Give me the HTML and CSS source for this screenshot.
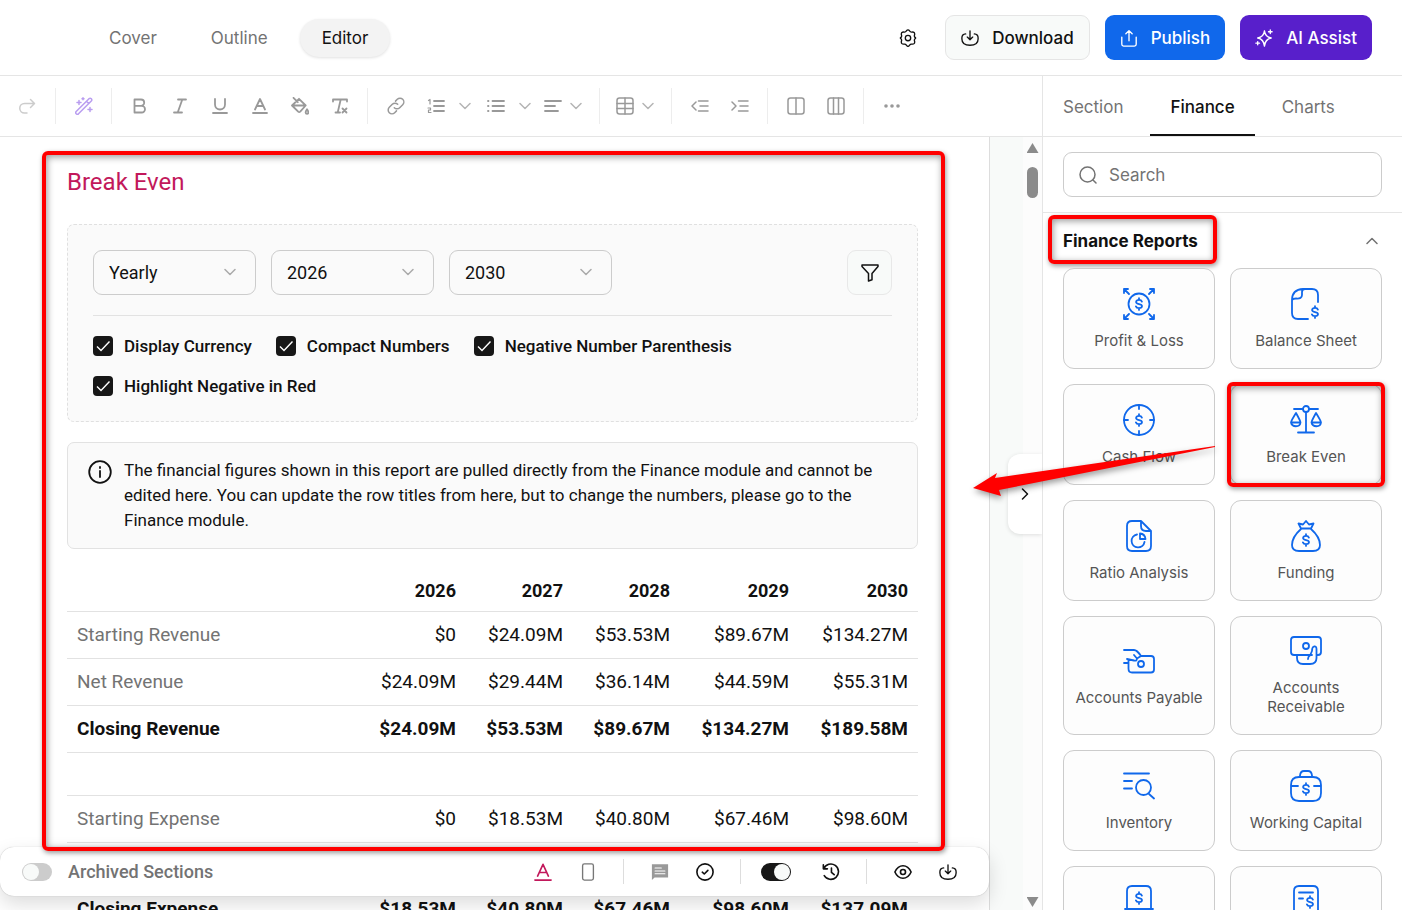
FILE: index.html
```
<!DOCTYPE html>
<html lang="en">
<head>
  <meta charset="utf-8">
  <title>Plan Editor - Break Even</title>
  <meta name="viewport" content="width=device-width, initial-scale=1.0">
  <link rel="stylesheet" href="styles.css">
</head>
<body>
  <!-- shared icons -->
  <svg class="sprite" aria-hidden="true">
    <symbol id="chevron" viewBox="0 0 12 12"><path d="M1 3.500l5 5 5-5"/></symbol>
    <symbol id="dollar" viewBox="0 0 32 32"><path d="M18.900 13.600c-.4-1.100-1.500-1.700-2.900-1.700-1.700 0-2.900.8-2.900 2.100 0 2.900 5.900 1.200 5.900 4.100 0 1.300-1.300 2.100-3 2.100-1.500 0-2.700-.6-3.100-1.800M16 10.200v1.700M16 20.200v1.700"/></symbol>
    <symbol id="download" viewBox="0 0 20 20"><path d="M10 2v10M7 9l3 3 3-3M5.200 5.500C2.300 5.800 1 7.300 1 9.800v1.200c0 4.700 2.800 7 9 7s9-2.300 9-7V9.800c0-2.500-1.300-4-4.200-4.300"/></symbol>
  </svg>

  <header class="topbar">
    <nav class="nav">
      <a href="#" class="nav-link">Cover</a>
      <a href="#" class="nav-link">Outline</a>
      <a href="#" class="nav-link active">Editor</a>
    </nav>
    <div class="actions">
      <button class="icon-btn" aria-label="Settings">
        <svg class="icon" viewBox="0 0 20 20"><path d="M8.200 2.200Q10-.4 11.800 2.200q.9 1.500 2.600 1.200 3.300-.3 3 2.800-.8 1.900.4 3.200 1.400.6 0 1.400-1.200 1.300-.4 3.200.3 3.100-3 2.800-1.700-.3-2.600 1.200-1.800 2.600-3.600 0-.9-1.500-2.600-1.200-3.300.3-3-2.800.8-1.900-.4-3.200-1.400-.8 0-1.400 1.200-1.300.4-3.200-.3-3.100 3-2.800 1.700.3 2.600-1.200z"/><circle cx="10" cy="10" r="3"/></svg>
      </button>
      <button class="btn btn-light"><svg class="icon"><use href="#download"/></svg>Download</button>
      <button class="btn btn-blue"><svg class="icon" viewBox="0 0 20 20"><path d="M10 13V2M6.500 5.300L10 1.800l3.500 3.500M2 9v8q0 2 2 2h12q2 0 2-2V9"/></svg>Publish</button>
      <button class="btn btn-purple"><svg class="icon" viewBox="0 0 20 20"><path d="M10.500 2q.8 6.700 7.500 8-6.700 1.300-7.500 9-.8-7.700-7.500-9 6.700-1.300 7.500-8zM17 1v4M15 3h4M3 14v3.500M1 15.700h4"/></svg>AI Assist</button>
    </div>
  </header>

  <div class="workspace">
    <main class="main">
      <div class="toolbar">
        <div class="tool-group">
          <button class="tool faded" aria-label="Redo"><svg class="icon" viewBox="0 0 18 18"><path d="M12.500 2.500L16.500 6.500l-4 4M16 6.500H6.500a4.700 4.700 0 0 0 0 9.500H9"/></svg></button>
        </div>
        <div class="tool-group">
          <button class="tool magic" aria-label="AI tools"><svg class="icon" viewBox="0 0 18 18"><path d="M1.200 14.500L14 1.700q1.200-1 2.300 0 1 1.200 0 2.300L3.500 16.800q-1.200 1-2.300 0-1-1.200 0-2.300zM11.500 4.300l2.200 2.200M4 3.500v4M2 5.500h4M15 10.500v4M13 12.500h4M8 .8v2M7 1.800h2"/></svg></button>
        </div>
        <div class="tool-group">
          <button class="tool" aria-label="Bold"><svg class="icon bold" viewBox="0 0 18 18"><path d="M3.500 2.500h6.500a3.200 3.200 0 0 1 0 6.400H3.500zM3.500 8.900h7.200a3.300 3.300 0 0 1 0 6.600H3.500z"/></svg></button>
          <button class="tool" aria-label="Italic"><svg class="icon bold" viewBox="0 0 18 18"><path d="M7 2.500h8M3 15.500h8M11.300 2.500l-4.600 13"/></svg></button>
          <button class="tool" aria-label="Underline"><svg class="icon bold" viewBox="0 0 18 18"><path d="M4 2v5.500a5 5 0 0 0 10 0V2M2 16h14"/></svg></button>
          <button class="tool" aria-label="Text color"><svg class="icon bold" viewBox="0 0 18 18"><path d="M4 12.500L9 2l5 10.500M5.700 9h6.600M2 16h14"/></svg></button>
          <button class="tool" aria-label="Fill color"><svg class="icon bold" viewBox="0 0 18 18"><path d="M2.500.8l4.300 4.400M8 1.800l6.700 6.700-5.500 6.200q-1 .9-2 0L1 8.500zM1.500 8.500h13M16 12.200c2 3 1.600 4.600 0 4.600s-2-1.600 0-4.600z"/></svg></button>
          <button class="tool" aria-label="Clear formatting"><svg class="icon bold" viewBox="0 0 18 18"><path d="M2 4.500v-2h14v2M9.700 2.500l-3 13M4.500 15.500H9M11.500 11.500l4 4M15.500 11.500l-4 4"/></svg></button>
        </div>
        <div class="tool-group">
          <button class="tool" aria-label="Link"><svg class="icon" viewBox="0 0 18 18"><path d="M7.300 10.700a3.800 3.800 0 0 0 5.400 0l3-3a3.800 3.800 0 0 0-5.400-5.400L8.500 4.100M10.700 7.300a3.800 3.800 0 0 0-5.400 0l-3 3a3.800 3.800 0 0 0 5.400 5.400l1.800-1.800"/></svg></button>
          <button class="split wide" aria-label="Numbered list"><svg class="icon bold" viewBox="0 0 18 18"><path d="M7 4h10M7 9h10M7 14h10"/><path class="thin" d="M1.500 3.500L3 2.500v4.500M1 11h2.500v2H1.500v2.500h2.500"/></svg><svg class="chev"><use href="#chevron"/></svg></button>
          <button class="split wide" aria-label="Bulleted list"><svg class="icon bold" viewBox="0 0 18 18"><path d="M5.500 4h11.500M5.500 9h11.500M5.500 14h11.500M1 4h.5M1 9h.5M1 14h.5"/></svg><svg class="chev"><use href="#chevron"/></svg></button>
          <button class="split" aria-label="Align"><svg class="icon bold" viewBox="0 0 18 18"><path d="M1 4h16M1 9h10M1 14h13"/></svg><svg class="chev"><use href="#chevron"/></svg></button>
        </div>
        <div class="tool-group">
          <button class="split" aria-label="Table"><svg class="icon" viewBox="0 0 18 18"><rect x="1" y="1" width="16" height="16" rx="2.500"/><path d="M1 6.500h16M1 11.500h16M9 1v16"/></svg><svg class="chev"><use href="#chevron"/></svg></button>
        </div>
        <div class="tool-group">
          <button class="tool" aria-label="Outdent"><svg class="icon" viewBox="0 0 18 18"><path d="M5 5L1 9l4 4M7.500 4H17M9 9h8M7.500 14H17"/></svg></button>
          <button class="tool" aria-label="Indent"><svg class="icon" viewBox="0 0 18 18"><path d="M1 5l4 4-4 4M7.500 4H17M9 9h8M7.500 14H17"/></svg></button>
        </div>
        <div class="tool-group">
          <button class="tool" aria-label="Two columns"><svg class="icon" viewBox="0 0 18 18"><rect x="1" y="1" width="16" height="16" rx="2.500"/><path d="M9 1v16"/></svg></button>
          <button class="tool" aria-label="Three columns"><svg class="icon" viewBox="0 0 18 18"><rect x="1" y="1" width="16" height="16" rx="2.500"/><path d="M6.500 1v16M11.500 1v16"/></svg></button>
        </div>
        <div class="tool-group">
          <button class="tool" aria-label="More"><svg class="icon dots" viewBox="0 0 18 18"><circle cx="3" cy="9" r="1.800"/><circle cx="9" cy="9" r="1.800"/><circle cx="15" cy="9" r="1.800"/></svg></button>
        </div>
      </div>

      <div class="canvas">
        <article class="page">
          <h1 class="title">Break Even</h1>

          <section class="filters">
            <div class="filter-row">
              <div class="select"><select aria-label="Period"><option>Yearly</option></select><svg class="chev"><use href="#chevron"/></svg></div>
              <div class="select"><select aria-label="From year"><option>2026</option></select><svg class="chev"><use href="#chevron"/></svg></div>
              <div class="select"><select aria-label="To year"><option>2030</option></select><svg class="chev"><use href="#chevron"/></svg></div>
              <button class="filter-btn" aria-label="Filter"><svg class="icon" viewBox="0 0 18 18"><path d="M1 1h16v1.500L11 9.500v6.200l-3.500 1.300V9.500L1 2.500z"/></svg></button>
            </div>
            <div class="checks">
              <label class="check"><input type="checkbox" checked>Display Currency</label>
              <label class="check"><input type="checkbox" checked>Compact Numbers</label>
              <label class="check"><input type="checkbox" checked>Negative Number Parenthesis</label>
              <label class="check"><input type="checkbox" checked>Highlight Negative in Red</label>
            </div>
          </section>

          <div class="notice">
            <svg class="notice-icon" viewBox="0 0 24 24"><circle cx="12" cy="12" r="10.800"/><path d="M12 11v6M12 7v1"/></svg>
            <p>The financial figures shown in this report are pulled directly from the Finance module and cannot be edited here. You can update the row titles from here, but to change the numbers, please go to the Finance module.</p>
          </div>

          <table class="report">
            <colgroup>
              <col>
              <col class="col-sm" span="3">
              <col class="col-lg" span="2">
            </colgroup>
            <thead>
              <tr><td></td><th>2026</th><th>2027</th><th>2028</th><th>2029</th><th>2030</th></tr>
            </thead>
            <tbody>
              <tr><th>Starting Revenue</th><td>$0</td><td>$24.09M</td><td>$53.53M</td><td>$89.67M</td><td>$134.27M</td></tr>
              <tr><th>Net Revenue</th><td>$24.09M</td><td>$29.44M</td><td>$36.14M</td><td>$44.59M</td><td>$55.31M</td></tr>
              <tr class="total"><th>Closing Revenue</th><td>$24.09M</td><td>$53.53M</td><td>$89.67M</td><td>$134.27M</td><td>$189.58M</td></tr>
              <tr class="spacer"><td colspan="6"></td></tr>
              <tr><th>Starting Expense</th><td>$0</td><td>$18.53M</td><td>$40.80M</td><td>$67.46M</td><td>$98.60M</td></tr>
              <tr class="spacer"><td colspan="6"></td></tr>
              <tr class="total"><th>Closing Expense</th><td>$18.53M</td><td>$40.80M</td><td>$67.46M</td><td>$98.60M</td><td>$137.09M</td></tr>
            </tbody>
          </table>
        </article>
        <div class="scrollbar">
          <span class="arrow-up"></span>
          <span class="thumb"></span>
          <span class="arrow-down"></span>
        </div>

        <button class="collapse" aria-label="Collapse panel"><svg class="chev" viewBox="0 0 12 12"><path d="M3.500 1l5 5-5 5"/></svg></button>

        <div class="bottom-bar">
          <label class="archived"><input type="checkbox" class="switch">Archived Sections</label>
          <div class="bar-tools">
            <button class="bar-btn pink" aria-label="Font color"><svg class="icon bold" viewBox="0 0 20 20"><path d="M4 14.500L10 1.500l6 13M6 10.500h8M1 19h18"/></svg></button>
            <button class="bar-btn gray" aria-label="Mobile view"><svg class="icon" viewBox="0 0 20 20"><rect x="4" y="1" width="12" height="18" rx="2"/></svg></button>
            <span class="divider"></span>
            <button class="bar-btn" aria-label="Comments"><svg class="icon comment" viewBox="0 0 20 20"><path d="M1 1.500h18v14.500h-15l-3 3z"/><path class="lines" d="M4.500 5.500h7M4.500 8.800h11M4.500 12h11"/></svg></button>
            <button class="bar-btn" aria-label="Approve"><svg class="icon bold" viewBox="0 0 20 20"><circle cx="10" cy="10" r="9"/><path d="M7 10.200l2.200 2 4-4"/></svg></button>
            <span class="divider"></span>
            <input type="checkbox" class="switch" checked aria-label="Track changes">
            <button class="bar-btn" aria-label="History"><svg class="icon bold" viewBox="0 0 20 20"><path d="M1.500 2v4.500H6M2 6.300A8.500 8.500 0 1 1 2.500 14M10.500 5.500V10.500l3 2.500"/></svg></button>
            <span class="divider"></span>
            <button class="bar-btn" aria-label="Preview"><svg class="icon bold" viewBox="0 0 20 20"><path d="M1 10c2-4.500 5-7 9-7s7 2.500 9 7c-2 4.500-5 7-9 7s-7-2.500-9-7z"/><circle cx="10" cy="10" r="2.800"/></svg></button>
            <button class="bar-btn" aria-label="Download"><svg class="icon"><use href="#download"/></svg></button>
          </div>
        </div>

        <div class="mark mark-report"></div>
      </div>
    </main>

    <aside class="sidebar">
      <nav class="tabs">
        <a href="#" class="tab">Section</a>
        <a href="#" class="tab active">Finance</a>
        <a href="#" class="tab">Charts</a>
      </nav>
      <div class="search-wrap">
        <div class="search">
          <svg class="icon" viewBox="0 0 18 18"><circle cx="8.500" cy="8.500" r="7.500"/><path d="M14 14l3 3"/></svg>
          <input type="text" placeholder="Search" aria-label="Search">
        </div>
      </div>
      <div class="panel">
        <div class="panel-head">
          <h2>Finance Reports<span class="mark mark-heading"></span></h2>
          <button class="fold" aria-label="Collapse section"><svg class="chev" viewBox="0 0 12 12"><path d="M1 8.500l5-5 5 5"/></svg></button>
        </div>
        <div class="tiles">
          <button class="tile"><svg viewBox="0 0 32 32"><circle cx="16" cy="16" r="10.500"/><use href="#dollar"/><path d="M6 6L1 1M1 5V1h4M26 6l5-5M27 1h4v4M6 26l-5 5M1 27v4h4M26 26l5 5M31 27v4h-4"/></svg>Profit &amp; Loss</button>
          <button class="tile"><svg viewBox="0 0 32 32"><path d="M28 14V7q0-6-6-6H13Q2 1.500 2 12v13q0 6 6 6h10M2 12q1-1.500 4-1.500 6 .5 6-3.500V4q0-3 3-3"/><use href="#dollar" x="9" y="8"/></svg>Balance Sheet</button>
          <button class="tile"><svg viewBox="0 0 32 32"><circle cx="16" cy="16" r="15"/><use href="#dollar"/><path d="M16 1v4M16 27v4M1 16h4M27 16h4"/></svg>Cash Flow</button>
          <button class="tile"><svg viewBox="0 0 32 32"><circle cx="16" cy="5" r="3"/><path d="M13 5H4M19 5h9M16 8V28.500M8 28.500h16M6 9q-5 8-5 9.500c1 5 9 5 9.500 0Q10.500 17 6 9zM1 18.500h9.500M26 9q-4.500 8-4.500 9.500c1 5 9 5 9.500 0Q31 17 26 9zM21.500 18.500H31"/></svg>Break Even<span class="mark mark-tile"></span></button>
          <button class="tile"><svg viewBox="0 0 32 32"><path d="M18 1H9Q4 1 4 6v20q0 5 5 5h14q5 0 5-5V11zM18 1v5q0 5 5 5h5M14 14.500a6.500 6.500 0 1 0 7.500 7.500M17 13.500V19h5.500q-.5-5-5.500-5.500z"/></svg>Ratio Analysis</button>
          <button class="tile"><svg viewBox="0 0 32 32"><path d="M11 8.500L8.500 3.500l4.500 1L16 1l3 3.500 4.500-1L21 8.500zM11 9Q2 17 2 25q0 6 7 6h14q7 0 7-6 0-8-9-16"/><use href="#dollar" y="4"/></svg>Funding</button>
          <button class="tile"><svg viewBox="0 0 32 32"><path d="M1 5h10q3 0 7 6M1 18h4.500M4 14l7 1.500q3 .8 3-2l-3-3.500M18 11h10q3 0 3 3v10.500q0 3-3 3H9q-3.500 0-3.500-4V15M14 13.500l4-2.500"/><circle cx="18" cy="19" r="3"/></svg>Accounts Payable</button>
          <button class="tile"><svg viewBox="0 0 32 32"><path d="M22 20H4q-3 0-3-3V5q0-3 3-3h24q3 0 3 3v12q0 3-3 3h-1.500M7 20v3q0 6 6 6h7q6.500 0 6.500-6V14q0-3-2.500-2.500-2 .5-2 4.500l-2 4.500q-2 1-2 3.500"/><circle cx="16" cy="11" r="3"/></svg>Accounts Receivable</button>
          <button class="tile"><svg viewBox="0 0 32 32"><path d="M1 3.500h25M1 11h8M1 18.500h8M26 24l5 4.500"/><circle cx="20.500" cy="17.500" r="7.500"/></svg>Inventory</button>
          <button class="tile"><svg viewBox="0 0 32 32"><path d="M10 7V5.500Q10.500 1 14 1h4q3.500 0 4 4.500V7M9 7h14q8 0 8 8v8q0 8-8 8H9q-8 0-8-8v-8q0-8 8-8zM1 16h7M24 16h7"/><use href="#dollar" y="3"/></svg>Working Capital</button>
          <button class="tile" aria-label="Loans"><svg viewBox="0 0 32 32"><path d="M4 23V6q0-5 5-5h14q5 0 5 5v17M2 24h28M5 24v3q0 4 4 4h14q4 0 4-4v-3"/><use href="#dollar" y="-3"/></svg></button>
          <button class="tile" aria-label="Taxes"><svg viewBox="0 0 32 32"><path d="M4 31V6q0-5 5-5h14q5 0 5 5v25M9 7.500h14M9 13.500h4"/><use href="#dollar" x="4" y="1"/></svg></button>
        </div>
      </div>
      <svg class="pointer" viewBox="0 0 252 70"><path d="M5 48l24-15-2 5L247 6v1L31 50l2 6z"/></svg>
    </aside>
  </div>
</body>
</html>
```
FILE: styles.css
```
* {
  margin: 0;
  padding: 0;
  box-sizing: border-box;
}

body {
  height: 100vh;
  display: flex;
  flex-direction: column;
  overflow: hidden;
  font-family: Inter, "Liberation Sans", sans-serif;
  font-size: 17px;
  color: #111;
  background: #fff;
}

button {
  font: inherit;
  color: inherit;
  background: none;
  border: none;
  cursor: pointer;
}

a {
  color: inherit;
  text-decoration: none;
}

svg {
  fill: none;
  stroke: currentColor;
  stroke-width: 1.5;
  stroke-linecap: round;
  stroke-linejoin: round;
  flex: none;
}

.sprite {
  position: absolute;
  width: 0;
  height: 0;
}

.icon {
  width: 18px;
  height: 18px;
}

.icon.bold {
  stroke-width: 1.8;
}

.icon .thin {
  stroke-width: 1.2;
}

.chev {
  width: 12px;
  height: 12px;
}

/* Top bar */
.topbar {
  height: 76px;
  flex: none;
  display: flex;
  align-items: center;
  justify-content: space-between;
  padding: 0 30px 0 87px;
  border-bottom: 1px solid #e5e5e5;
}

.nav {
  display: flex;
  gap: 10px;
}

.nav-link {
  padding: 0 22px;
  line-height: 38px;
  border-radius: 20px;
  color: #737373;
}

.nav-link.active {
  background: #f3f3f3;
  color: #111;
  box-shadow: 0 1px 3px rgba(0, 0, 0, 0.12);
}

.actions {
  display: flex;
  align-items: center;
  gap: 15px;
}

.icon-btn {
  display: flex;
  margin-right: 13px;
}

.btn {
  display: flex;
  align-items: center;
  gap: 13px;
  height: 45px;
  padding: 0 15px;
  border-radius: 9px;
  font-weight: 500;
}

.btn-light {
  background: #f8faf9;
  border: 1px solid #e5e5e5;
}

.btn-blue {
  background: #1068eb;
  color: #fff;
}

.btn-purple {
  background: #581fcb;
  color: #fff;
}

/* Layout */
.workspace {
  flex: 1;
  min-height: 0;
  display: flex;
}

.main {
  flex: 1;
  min-width: 0;
  display: flex;
  flex-direction: column;
}

/* Toolbar */
.toolbar {
  height: 61px;
  flex: none;
  display: flex;
  align-items: center;
  border-bottom: 1px solid #e5e5e5;
  color: #999;
}

.tool-group {
  display: flex;
  align-items: center;
  height: 36px;
  padding: 0 7px 0 8px;
  border-right: 1px solid #ededed;
}

.tool-group:first-child {
  padding: 0 8px 0 7px;
}

.tool-group:last-child {
  border-right: none;
}

.tool {
  width: 40px;
  height: 36px;
  display: flex;
  align-items: center;
  justify-content: center;
}

.tool.faded {
  color: #ccc;
}

.tool.magic {
  color: #b99df0;
}

.split {
  width: 56px;
  height: 36px;
  padding-left: 8px;
  display: flex;
  align-items: center;
  gap: 8px;
}

.split.wide {
  width: 60px;
  padding-left: 11px;
  gap: 14px;
}

.split .chev {
  color: #b5b5b5;
}

.dots {
  fill: currentColor;
  stroke: none;
}

/* Document */
.canvas {
  flex: 1;
  min-height: 0;
  position: relative;
  display: flex;
  overflow: hidden;
  background: #f8faf9;
}

.page {
  flex: 1;
  min-width: 0;
  margin-right: 33px;
  padding: 30px 71px 0 67px;
  border-right: 1px solid #ddd;
  background: #fff;
  font-family: Roboto, "Liberation Sans", sans-serif;
  font-size: 17px;
}

.title {
  font-size: 24px;
  font-weight: 400;
  line-height: 30px;
  color: #c2185b;
}

.filters {
  margin-top: 27px;
  padding: 25px;
  border: 1px dashed #e0e0e0;
  border-radius: 7px;
  background: #fafafa;
}

.filter-row {
  display: flex;
  gap: 15px;
  padding-bottom: 20px;
  border-bottom: 1px solid #e2e2e2;
}

.select {
  position: relative;
  width: 163px;
}

.select select {
  appearance: none;
  width: 100%;
  height: 45px;
  padding: 0 15px;
  border: 1px solid #ccc;
  border-radius: 9px;
  background: transparent;
  font: inherit;
  font-size: 18px;
  color: #111;
}

.select .chev {
  position: absolute;
  right: 20px;
  top: 16px;
  color: #aaa;
  pointer-events: none;
}

.filter-btn {
  width: 45px;
  height: 45px;
  margin-left: auto;
  display: flex;
  align-items: center;
  justify-content: center;
  border: 1px solid #e8e8e8;
  border-radius: 9px;
  background: #f8faf9;
}

.checks {
  display: flex;
  flex-wrap: wrap;
  gap: 20px 24px;
  padding-top: 20px;
}

.check {
  display: flex;
  align-items: center;
  gap: 11px;
  font-weight: 500;
  line-height: 20px;
}

.check input {
  appearance: none;
  width: 20px;
  height: 20px;
  border-radius: 4px;
  background: #171717;
}

.check input:checked {
  background-image: url("data:image/svg+xml,%3Csvg xmlns='http://www.w3.org/2000/svg' viewBox='0 0 20 20' fill='none' stroke='white' stroke-width='1.4'%3E%3Cpath d='M4 10.500l4 4 8.500-9'/%3E%3C/svg%3E");
}

.notice {
  display: flex;
  gap: 12px;
  margin-top: 20px;
  padding: 15px 20px;
  border: 1px solid #e2e2e2;
  border-radius: 7px;
  background: #fafafa;
  line-height: 25px;
}

.notice-icon {
  width: 24px;
  height: 24px;
  margin-top: 2px;
  stroke-width: 1.8;
}

.report {
  width: 100%;
  margin-top: 21px;
  table-layout: fixed;
  border-collapse: collapse;
  font-size: 19px;
}

.col-sm {
  width: 107px;
}

.col-lg {
  width: 119px;
}

.report th,
.report td {
  height: 47px;
  padding: 0 10px;
  border-bottom: 1px solid #e2e2e2;
  text-align: right;
  white-space: nowrap;
}

.report thead th,
.report thead td {
  height: 41px;
  font-size: 18px;
  font-weight: 700;
}

.report tbody th {
  text-align: left;
  font-weight: 400;
  color: #737373;
}

.report .total th,
.report .total td {
  font-weight: 700;
  color: #111;
}

.report .spacer td {
  height: 43px;
}

.scrollbar {
  width: 19px;
  flex: none;
  display: flex;
  flex-direction: column;
  align-items: center;
  padding: 6px 0 3px;
  background: #fcfcfc;
}

.arrow-up,
.arrow-down {
  width: 12px;
  height: 10px;
  background: #8b8b8b;
  clip-path: polygon(50% 0, 100% 100%, 0 100%);
}

.arrow-down {
  margin-top: auto;
  clip-path: polygon(0 0, 100% 0, 50% 100%);
}

.thumb {
  width: 11px;
  height: 31px;
  margin-top: 14px;
  border-radius: 6px;
  background: #8b8b8b;
}

.collapse {
  position: absolute;
  right: 0;
  top: 317px;
  width: 34px;
  height: 80px;
  display: flex;
  align-items: center;
  justify-content: center;
  border-radius: 12px 0 0 12px;
  background: #fff;
  box-shadow: 0 1px 4px rgba(0, 0, 0, 0.12);
}

/* Bottom bar */
.bottom-bar {
  position: absolute;
  left: 0;
  right: 53px;
  bottom: 14px;
  height: 49px;
  display: flex;
  align-items: center;
  justify-content: space-between;
  padding: 0 19px 0 22px;
  border-radius: 14px;
  background: #fff;
  box-shadow: 0 0 1px rgba(0, 0, 0, 0.3), 0 8px 20px rgba(0, 0, 0, 0.14);
}

.archived {
  display: flex;
  align-items: center;
  gap: 16px;
  font-family: Roboto, "Liberation Sans", sans-serif;
  font-size: 18px;
  font-weight: 500;
  color: #737373;
}

.switch {
  appearance: none;
  width: 30px;
  height: 18px;
  display: flex;
  padding: 1px;
  border-radius: 9px;
  background: #ccc;
}

.switch::before {
  content: "";
  width: 16px;
  height: 16px;
  border-radius: 50%;
  background: #f8faf9;
}

.switch:checked {
  justify-content: flex-end;
  background: #171717;
}

.bar-tools {
  display: flex;
  align-items: center;
}

.bar-tools .switch {
  margin: 0 17px 0 20px;
}

.bar-tools .divider + .bar-btn,
.bar-btn + .divider {
  margin-left: 13px;
}

.bar-btn {
  width: 45px;
  height: 36px;
  display: flex;
  align-items: center;
  justify-content: center;
}

.bar-btn.pink {
  color: #c2185b;
}

.bar-btn.gray {
  color: #777;
}

.comment {
  fill: #999;
  stroke: none;
}

.comment .lines {
  stroke: #fff;
  stroke-width: 1.2;
}

.divider {
  width: 1px;
  height: 25px;
  background: #ddd;
}

/* Sidebar */
.sidebar {
  position: relative;
  width: 360px;
  flex: none;
  display: flex;
  flex-direction: column;
  border-left: 1px solid #e5e5e5;
}

.tabs {
  height: 61px;
  flex: none;
  display: flex;
  gap: 7px;
  border-bottom: 1px solid #e5e5e5;
}

.tab {
  height: 60px;
  padding: 0 20px;
  line-height: 62px;
  color: #737373;
}

.tab.active {
  color: #111;
  font-weight: 500;
  border-bottom: 2px solid #111;
}

.search-wrap {
  padding: 15px 20px;
  border-bottom: 1px solid #e5e5e5;
}

.search {
  height: 45px;
  display: flex;
  align-items: center;
  gap: 12px;
  padding: 0 15px;
  border: 1px solid #ccc;
  border-radius: 9px;
  color: #737373;
}

.search input {
  flex: 1;
  min-width: 0;
  border: none;
  outline: none;
  font: inherit;
}

.search input::placeholder {
  color: #737373;
}

.panel {
  flex: 1;
  min-height: 0;
  padding: 0 20px;
  overflow: hidden;
}

.panel-head {
  height: 55px;
  display: flex;
  align-items: center;
  justify-content: space-between;
}

.panel-head h2 {
  position: relative;
  font-size: 17px;
  font-weight: 700;
  line-height: 20px;
}

.fold {
  display: flex;
  padding: 4px;
  color: #737373;
}

.tiles {
  display: grid;
  grid-template-columns: 1fr 1fr;
  gap: 15px;
}

.tile {
  position: relative;
  min-height: 101px;
  padding: 18px 10px;
  display: flex;
  flex-direction: column;
  align-items: center;
  justify-content: center;
  gap: 11px;
  border: 1px solid #ccc;
  border-radius: 11px;
  background: #fdfdfd;
  font-size: 15px;
  line-height: 19px;
  color: #555;
}

.tile svg {
  width: 32px;
  height: 32px;
  color: #1068eb;
  stroke-width: 1.8;
}

.tile[aria-label] {
  justify-content: flex-start;
}

/* Red callouts */
.mark {
  position: absolute;
  border: 4px solid #f00;
  border-radius: 6px;
  box-shadow: 1px 2px 5px rgba(0, 0, 0, 0.4), inset 1px 2px 7px rgba(0, 0, 0, 0.4);
  pointer-events: none;
}

.mark-report {
  left: 42px;
  right: 97px;
  top: 14px;
  bottom: 59px;
}

.mark-heading {
  inset: -16px -19px -13px -15px;
}

.mark-tile {
  inset: -3px -4px;
}

.pointer {
  position: absolute;
  left: -75px;
  top: 364px;
  width: 252px;
  height: 70px;
  fill: #f00;
  stroke: none;
  filter: drop-shadow(1px 3px 3px rgba(0, 0, 0, 0.4));
  pointer-events: none;
}
```
